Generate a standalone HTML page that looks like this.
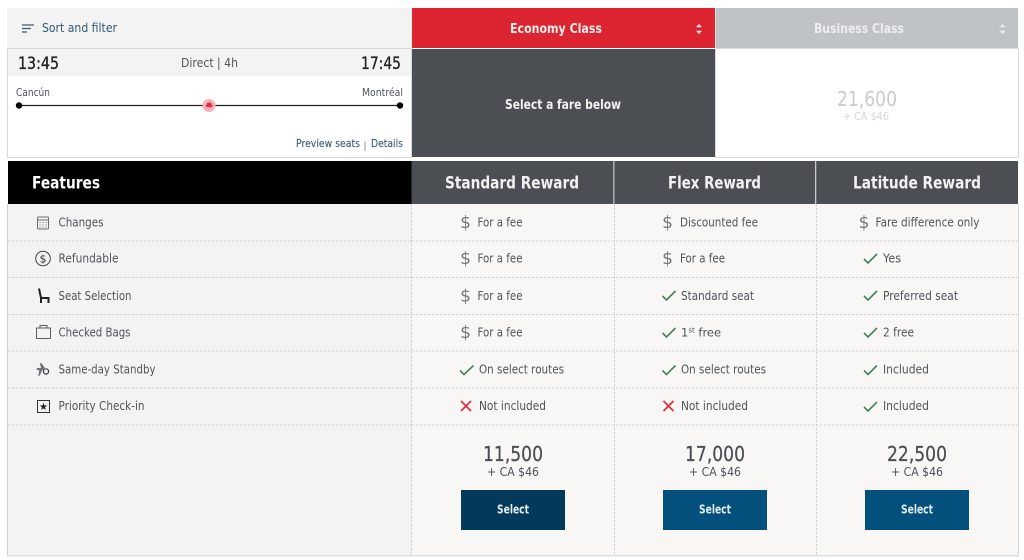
<!DOCTYPE html>
<html>
<head>
<meta charset="utf-8">
<style>
html,body{margin:0;padding:0;background:#fff}
svg{display:block;filter:blur(.3px)}
text{font-family:"DejaVu Sans","Liberation Sans",sans-serif;fill:#505459}
.b{font-weight:bold}
.s{stroke-width:.35px}
</style>
</head>
<body>
<svg width="1024" height="560" viewBox="0 0 1024 560" xmlns="http://www.w3.org/2000/svg">
<rect width="1024" height="560" fill="#fff"/>
<!-- top left -->
<rect x="7" y="8" width="405" height="40" fill="#f3f3f3"/>
<g stroke="#3f5a70" stroke-width="1.3"><path d="M22 25H34M22 28.500H31M22 32H27"/></g>
<text x="42" y="32" font-size="12.500" textLength="75" lengthAdjust="spacingAndGlyphs" style="fill:#2f5a78">Sort and filter</text>
<!-- flight box -->
<rect x="7.500" y="48.500" width="404" height="109" fill="#fff" stroke="#d8d8d8"/>
<rect x="8" y="49" width="403" height="27" fill="#f3f3f3"/>
<text x="18" y="69" font-size="16.500" textLength="41" lengthAdjust="spacingAndGlyphs" class="s" style="fill:#222;stroke:#222">13:45</text>
<text x="361" y="69" font-size="16.500" textLength="40" lengthAdjust="spacingAndGlyphs" class="s" style="fill:#222;stroke:#222">17:45</text>
<text x="181" y="67" font-size="12.500" textLength="57" lengthAdjust="spacingAndGlyphs">Direct | 4h</text>
<text x="16" y="96" font-size="11" textLength="34" lengthAdjust="spacingAndGlyphs">Cancún</text>
<text x="362" y="96" font-size="11" textLength="41" lengthAdjust="spacingAndGlyphs">Montréal</text>
<path d="M19 105.500H400" stroke="#222" stroke-width="1.200"/>
<circle cx="19" cy="105.500" r="3.200" fill="#000"/>
<circle cx="400" cy="105.500" r="3.200" fill="#000"/>
<circle cx="209" cy="105.500" r="6.500" fill="#f6b3ba"/>
<path d="M209 101.500l1.200 1.800 1.600-.6-.4 2 1.800.4-1.400 1.400.3.800h-5.800l.3-.8-1.400-1.400 1.800-.4-.4-2 1.600.6z" fill="#e0303e"/>
<text x="296" y="147" font-size="11" textLength="64" lengthAdjust="spacingAndGlyphs" class="s" style="fill:#41637c;stroke:#41637c;stroke-width:.15px">Preview seats</text>
<path d="M365 141.500V151" stroke="#8a949b" stroke-width="1"/>
<text x="371" y="147" font-size="11" textLength="32" lengthAdjust="spacingAndGlyphs" style="fill:#41637c;stroke:#41637c;stroke-width:.15px">Details</text>
<!-- cabin headers -->
<rect x="412" y="8" width="303" height="40" fill="#dc2530"/>
<rect x="715.500" y="8" width="302.500" height="40" fill="#c0c3c6"/>
<text x="510" y="33" font-size="13.500" class="b" textLength="92" lengthAdjust="spacingAndGlyphs" style="fill:#fbeeee">Economy Class</text>
<text x="814" y="33" font-size="13.500" class="b" textLength="90" lengthAdjust="spacingAndGlyphs" style="fill:#eceeef">Business Class</text>
<path d="M699 24l3 3.200h-6zM699 34l3-3.200h-6z" fill="#fbeeee"/>
<path d="M1002.500 24l3 3.200h-6zM1002.500 34l3-3.200h-6z" fill="#eceeef"/>
<rect x="412" y="49" width="303" height="108" fill="#4b4f54"/>
<rect x="715.500" y="48.500" width="303" height="109" fill="#fff" stroke="#dcdcdc"/>
<text x="505" y="109" font-size="13.500" class="b" textLength="116" lengthAdjust="spacingAndGlyphs" style="fill:#f2f2f2">Select a fare below</text>
<text x="837" y="106" font-size="20.500" textLength="60" lengthAdjust="spacingAndGlyphs" style="fill:#c8cbcd">21,600</text>
<text x="843" y="120" font-size="11" textLength="46" lengthAdjust="spacingAndGlyphs" style="fill:#d4d6d8">+ CA $46</text>
<!-- body -->
<rect x="8" y="204" width="404" height="351" fill="#f4f3f3"/>
<rect x="412" y="204" width="606" height="351" fill="#f9f7f6"/>
<rect x="7" y="204" width="1" height="352" fill="#cfcfcf"/>
<rect x="1018" y="204" width="1" height="352" fill="#dcdcdc"/>
<rect x="7" y="555" width="1012" height="1.500" fill="#dedede"/>
<!-- table header -->
<rect x="8" y="161" width="403.500" height="43" fill="#000"/>
<rect x="411.500" y="161" width="202" height="43" fill="#4b4f54"/>
<rect x="614.300" y="161" width="201" height="43" fill="#4b4f54"/>
<rect x="816.200" y="161" width="201.800" height="43" fill="#4b4f54"/>
<text x="32" y="188.500" font-size="16.500" class="b" textLength="68" lengthAdjust="spacingAndGlyphs" style="fill:#fff">Features</text>
<text x="445" y="188.500" font-size="17" class="b" textLength="134" lengthAdjust="spacingAndGlyphs" style="fill:#f2f2f2">Standard Reward</text>
<text x="668" y="188.500" font-size="17" class="b" textLength="93" lengthAdjust="spacingAndGlyphs" style="fill:#f2f2f2">Flex Reward</text>
<text x="853" y="188.500" font-size="17" class="b" textLength="128" lengthAdjust="spacingAndGlyphs" style="fill:#f2f2f2">Latitude Reward</text>
<!-- dividers -->
<g stroke="#d2d2d2" stroke-width="1" stroke-dasharray="2.500 1.500" fill="none">
<path d="M8 241H1018M8 277.500H1018M8 314.500H1018M8 351H1018M8 388H1018M8 425H1018"/>
<path d="M411.500 204V555M614.500 204V555M816.500 204V555"/>
</g>
<!-- feature icons -->
<g fill="none" stroke="#6a6e72" stroke-width="1">
<rect x="37.500" y="217" width="11" height="12" rx="1"/>
<path d="M37.500 220H48.500M39.500 222.500h1M42.500 222.500h1M45.500 222.500h1M39.500 225h1M42.500 225h1M45.500 225h1M39.500 227.300h1M42.500 227.300h1M45.500 227.300h1"/>
<circle cx="43" cy="258.500" r="7.300" stroke="#444"/>
<path d="M36.500 328h14v10.500h-14zM40 328v-2.500h7v2.500" stroke="#5a5d60"/>
<rect x="37.500" y="400.500" width="12" height="12" stroke="#333"/>
<circle cx="46" cy="371.500" r="2.600" stroke="#333" stroke-width="1.200"/>
</g>
<path d="M37 368h4l-1.200-5 1.800.2 3.600 5 2.500.8-3 .8-2.500 .2-2.400 5.800-1.600 0 1-5.500-2.700-.4z" fill="#70757a"/>
<text x="43" y="262.500" font-size="11" text-anchor="middle" style="fill:#333">$</text>
<text x="43.500" y="410" font-size="10" text-anchor="middle" style="fill:#222">★</text>
<path d="M39 288.500l2 9.500h7.500v5M41 298v5" fill="none" stroke="#222" stroke-width="2"/>
<!-- feature labels -->
<g font-size="12">
<text x="58.500" y="226.500" textLength="45" lengthAdjust="spacingAndGlyphs">Changes</text>
<text x="58.500" y="262.500" textLength="60" lengthAdjust="spacingAndGlyphs">Refundable</text>
<text x="58.500" y="300" textLength="73" lengthAdjust="spacingAndGlyphs">Seat Selection</text>
<text x="58.500" y="336.500" textLength="72" lengthAdjust="spacingAndGlyphs">Checked Bags</text>
<text x="58.500" y="373.500" textLength="97" lengthAdjust="spacingAndGlyphs">Same-day Standby</text>
<text x="58.500" y="410" textLength="86" lengthAdjust="spacingAndGlyphs">Priority Check-in</text>
</g>
<!-- dollars -->
<g font-size="17" text-anchor="middle">
<text x="465.500" y="228" style="fill:#777">$</text>
<text x="465.500" y="264" style="fill:#777">$</text>
<text x="465.500" y="301.500" style="fill:#777">$</text>
<text x="465.500" y="338" style="fill:#777">$</text>
<text x="667.500" y="228" style="fill:#777">$</text>
<text x="667.500" y="264" style="fill:#777">$</text>
<text x="864" y="228" style="fill:#777">$</text>
</g>
<!-- checks -->
<g fill="none" stroke="#3f8458" stroke-width="1.600">
<path d="M460 370.500l4 4 9.500-9"/>
<path d="M662.500 296l4 4 9-9"/>
<path d="M662.500 333l4 4 9-9"/>
<path d="M662.500 370.500l4 4 9-9"/>
<path d="M864 259l4 4 9-9"/>
<path d="M864 296l4 4 9-9"/>
<path d="M864 333l4 4 9-9"/>
<path d="M864 370.500l4 4 9-9"/>
<path d="M864 407l4 4 9-9"/>
</g>
<!-- crosses -->
<g fill="none" stroke="#d9303c" stroke-width="1.700">
<path d="M461 401l10 10M471 401l-10 10"/>
<path d="M663.500 401l10 10M673.500 401l-10 10"/>
</g>
<!-- cell text -->
<g font-size="12">
<text x="477.500" y="226.500" textLength="45" lengthAdjust="spacingAndGlyphs">For a fee</text>
<text x="477.500" y="262.500" textLength="45" lengthAdjust="spacingAndGlyphs">For a fee</text>
<text x="477.500" y="300" textLength="45" lengthAdjust="spacingAndGlyphs">For a fee</text>
<text x="477.500" y="336.500" textLength="45" lengthAdjust="spacingAndGlyphs">For a fee</text>
<text x="479" y="373.500" textLength="85" lengthAdjust="spacingAndGlyphs">On select routes</text>
<text x="479" y="410" textLength="67" lengthAdjust="spacingAndGlyphs">Not included</text>
<text x="680" y="226.500" textLength="78" lengthAdjust="spacingAndGlyphs">Discounted fee</text>
<text x="680" y="262.500" textLength="45" lengthAdjust="spacingAndGlyphs">For a fee</text>
<text x="681" y="300" textLength="73" lengthAdjust="spacingAndGlyphs">Standard seat</text>
<text x="681" y="336.500" font-size="11.500">1<tspan font-size="7" dy="-4">st</tspan><tspan dy="4"> free</tspan></text>
<text x="681" y="373.500" textLength="85" lengthAdjust="spacingAndGlyphs">On select routes</text>
<text x="681" y="410" textLength="67" lengthAdjust="spacingAndGlyphs">Not included</text>
<text x="875.500" y="226.500" textLength="104" lengthAdjust="spacingAndGlyphs">Fare difference only</text>
<text x="883" y="262.500" textLength="18" lengthAdjust="spacingAndGlyphs">Yes</text>
<text x="883" y="300" textLength="75" lengthAdjust="spacingAndGlyphs">Preferred seat</text>
<text x="883" y="336.500" textLength="31" lengthAdjust="spacingAndGlyphs">2 free</text>
<text x="883" y="373.500" textLength="46" lengthAdjust="spacingAndGlyphs">Included</text>
<text x="883" y="410" textLength="46" lengthAdjust="spacingAndGlyphs">Included</text>
</g>
<!-- prices -->
<g font-size="20.500">
<text x="483" y="461" textLength="60" lengthAdjust="spacingAndGlyphs" style="fill:#4b4f54;stroke:#4b4f54;stroke-width:.25px">11,500</text>
<text x="685" y="461" textLength="60" lengthAdjust="spacingAndGlyphs" style="fill:#4b4f54;stroke:#4b4f54;stroke-width:.25px">17,000</text>
<text x="887" y="461" textLength="60" lengthAdjust="spacingAndGlyphs" style="fill:#4b4f54;stroke:#4b4f54;stroke-width:.25px">22,500</text>
</g>
<g font-size="12.500">
<text x="487" y="476" textLength="52" lengthAdjust="spacingAndGlyphs" style="fill:#4b4f54">+ CA $46</text>
<text x="689" y="476" textLength="52" lengthAdjust="spacingAndGlyphs" style="fill:#4b4f54">+ CA $46</text>
<text x="891" y="476" textLength="52" lengthAdjust="spacingAndGlyphs" style="fill:#4b4f54">+ CA $46</text>
</g>
<!-- buttons -->
<rect x="461" y="490" width="104" height="40" fill="#03395a"/>
<rect x="663" y="490" width="104" height="40" fill="#03507c"/>
<rect x="865" y="490" width="104" height="40" fill="#03507c"/>
<g font-size="12.500" class="b">
<text x="497" y="513.500" textLength="32" lengthAdjust="spacingAndGlyphs" style="fill:#e4ecf1">Select</text>
<text x="699" y="513.500" textLength="32" lengthAdjust="spacingAndGlyphs" style="fill:#e4ecf1">Select</text>
<text x="901" y="513.500" textLength="32" lengthAdjust="spacingAndGlyphs" style="fill:#e4ecf1">Select</text>
</g>
</svg>
</body>
</html>
